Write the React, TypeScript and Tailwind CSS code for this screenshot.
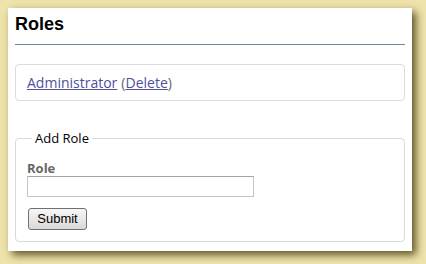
export default function App() {
  return (
    <div className="h-[264px] w-[426px] bg-[#eee3ab] p-[8px] font-['Open_Sans',sans-serif]">
      <div className="w-[404px] bg-white px-[7px] pb-[9px] shadow-[4px_4px_8px_rgba(60,50,5,0.8)]">
        <div className="border-b border-[#6d8893] pt-[5px] pb-[9px]">
          <h2 className="font-['Liberation_Sans',Arial,sans-serif] text-[18px] font-bold leading-[22px] text-black">
            Roles
          </h2>
        </div>

        <div className="mt-[19px] flex h-[37px] items-center rounded-[4px] border border-[#dcdcdc] px-[11px] text-[14px] text-[#666]">
          <a href="#" className="text-[#4f4f9c] underline">
            Administrator
          </a>
          <span className="ml-[4px]">(</span>
          <a href="#" className="text-[#4f4f9c] underline">
            Delete
          </a>
          <span>)</span>
        </div>

        <fieldset className="mt-[28px] rounded-[4px] border border-[#d5dadd] px-[11px] pb-[11px]">
          <legend className="ml-[5px] px-[3px] text-[13px] leading-[18px] text-black">
            Add Role
          </legend>
          <label className="mt-[13px] block text-[13px] font-bold leading-[16px] text-[#666]">
            Role
          </label>
          <input
            type="text"
            className="block h-[21px] w-[227px] border border-[#c4c4c4] border-t-[#a4a4a4] bg-white outline-none"
          />
          <button
            type="button"
            className="mt-[11px] ml-[1px] block h-[22px] w-[59px] rounded-[3px] border border-[#707070] bg-gradient-to-b from-[#f7f7f7] to-[#d9d9d9] font-['Liberation_Sans',Arial,sans-serif] text-[13px] leading-[20px] text-black"
          >
            Submit
          </button>
        </fieldset>
      </div>
    </div>
  );
}
